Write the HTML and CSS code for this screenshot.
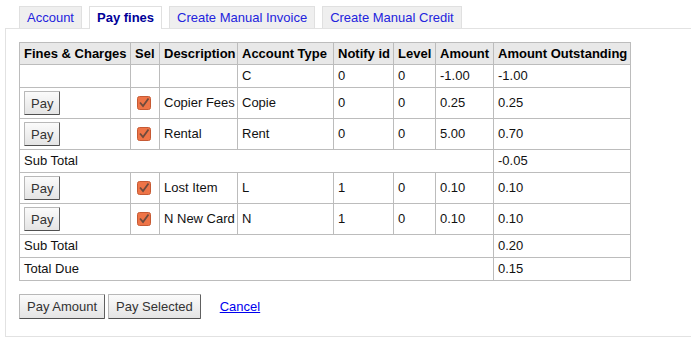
FILE: index.html
```html
<!DOCTYPE html>
<html lang="en">
<head>
    <meta charset="UTF-8">
    <title>Pay fines</title>
    <link rel="stylesheet" href="styles.css">
</head>
<body>
    <div class="page">
        <ul class="tabs">
            <li class="tab"><a href="#">Account</a></li>
            <li class="tab active"><a href="#">Pay fines</a></li>
            <li class="tab"><a href="#">Create Manual Invoice</a></li>
            <li class="tab"><a href="#">Create Manual Credit</a></li>
        </ul>

        <div class="panel">
            <table class="fines">
                <colgroup>
                    <col class="c-fines">
                    <col class="c-sel">
                    <col class="c-desc">
                    <col class="c-type">
                    <col class="c-notify">
                    <col class="c-level">
                    <col class="c-amount">
                    <col class="c-out">
                </colgroup>
                <thead>
                    <tr>
                        <th>Fines &amp; Charges</th>
                        <th>Sel</th>
                        <th>Description</th>
                        <th>Account Type</th>
                        <th>Notify id</th>
                        <th>Level</th>
                        <th>Amount</th>
                        <th>Amount Outstanding</th>
                    </tr>
                </thead>
                <tbody>
                    <tr>
                        <td></td><td></td><td></td>
                        <td>C</td><td>0</td><td>0</td><td>-1.00</td><td>-1.00</td>
                    </tr>
                    <tr class="line">
                        <td><button class="btn">Pay</button></td>
                        <td><span class="check"><svg width="14" height="14" viewBox="0 0 14 14"><rect x="0.5" y="0.5" width="13" height="13" rx="2" fill="#ee7447" stroke="#c65a34"/><path d="M3 6.5 L6 10 L11.5 2.5" fill="none" stroke="#6e4b3d" stroke-width="1.8"/></svg></span></td>
                        <td>Copier Fees</td><td>Copie</td><td>0</td><td>0</td><td>0.25</td><td>0.25</td>
                    </tr>
                    <tr class="line">
                        <td><button class="btn">Pay</button></td>
                        <td><span class="check"><svg width="14" height="14" viewBox="0 0 14 14"><rect x="0.5" y="0.5" width="13" height="13" rx="2" fill="#ee7447" stroke="#c65a34"/><path d="M3 6.5 L6 10 L11.5 2.5" fill="none" stroke="#6e4b3d" stroke-width="1.8"/></svg></span></td>
                        <td>Rental</td><td>Rent</td><td>0</td><td>0</td><td>5.00</td><td>0.70</td>
                    </tr>
                    <tr>
                        <td colspan="7">Sub Total</td><td>-0.05</td>
                    </tr>
                    <tr class="line">
                        <td><button class="btn">Pay</button></td>
                        <td><span class="check"><svg width="14" height="14" viewBox="0 0 14 14"><rect x="0.5" y="0.5" width="13" height="13" rx="2" fill="#ee7447" stroke="#c65a34"/><path d="M3 6.5 L6 10 L11.5 2.5" fill="none" stroke="#6e4b3d" stroke-width="1.8"/></svg></span></td>
                        <td>Lost Item</td><td>L</td><td>1</td><td>0</td><td>0.10</td><td>0.10</td>
                    </tr>
                    <tr class="line">
                        <td><button class="btn">Pay</button></td>
                        <td><span class="check"><svg width="14" height="14" viewBox="0 0 14 14"><rect x="0.5" y="0.5" width="13" height="13" rx="2" fill="#ee7447" stroke="#c65a34"/><path d="M3 6.5 L6 10 L11.5 2.5" fill="none" stroke="#6e4b3d" stroke-width="1.8"/></svg></span></td>
                        <td>N New Card</td><td>N</td><td>1</td><td>0</td><td>0.10</td><td>0.10</td>
                    </tr>
                    <tr>
                        <td colspan="7">Sub Total</td><td>0.20</td>
                    </tr>
                    <tr>
                        <td colspan="7">Total Due</td><td>0.15</td>
                    </tr>
                </tbody>
            </table>

            <div class="actions">
                <button class="btn">Pay Amount</button>
                <button class="btn">Pay Selected</button>
                <a class="cancel" href="#">Cancel</a>
            </div>
        </div>
    </div>
</body>
</html>
```

FILE: styles.css
```css
body {
    margin: 0;
    font-family: "Liberation Sans", Arial, sans-serif;
    font-size: 13px;
    color: #000;
    background-color: #fff;
    overflow: hidden;
}

.page {
    padding: 6px 0 0 5px;
}

/* Tab strip sits on top of the panel border */
.tabs {
    list-style: none;
    margin: 0 0 0 14px;
    padding: 0;
    display: flex;
    gap: 7px;
    position: relative;
    z-index: 1;
}

.tab {
    background-color: #efefef;
    border: 1px solid #e0e0e0;
    border-bottom: none;
    height: 22px;
    box-sizing: border-box;
}

.tab a {
    display: block;
    padding: 3px 7px 0 7px;
    line-height: 16px;
    color: #2323dd;
    text-decoration: none;
}

.tab.active {
    background-color: #fff;
    height: 23px;
    margin-bottom: -1px;
}

.tab.active a {
    color: #000099;
    font-weight: bold;
}

.panel {
    border: 1px solid #e2e2e2;
    width: 720px;
    padding: 13px 13px 17px 13px;
    box-sizing: border-box;
}

.fines {
    border-collapse: collapse;
    border: 1px solid #bcbcbc;
    table-layout: fixed;
    width: 611px;
}

.c-fines { width: 111px; }
.c-sel { width: 29px; }
.c-desc { width: 78px; }
.c-type { width: 96px; }
.c-notify { width: 60px; }
.c-level { width: 42px; }
.c-amount { width: 58px; }
.c-out { width: 137px; }

.fines th,
.fines td {
    border: 1px solid #bcbcbc;
    padding: 3px 4px;
    text-align: left;
    line-height: 16px;
    white-space: nowrap;
    overflow: visible;
}

.fines th {
    background-color: #e8e8e8;
    font-weight: bold;
    line-height: 15px;
    padding-left: 4px;
    padding-right: 2px;
}

.fines td {
    color: #111;
}

.check {
    display: block;
    margin-left: 2px;
    height: 14px;
}

.check svg {
    display: block;
}

.btn {
    font-family: "Liberation Sans", Arial, sans-serif;
    font-size: 13px;
    color: #333;
    height: 25px;
    padding: 0 7px;
    background: linear-gradient(#fbfbfb, #e4e4e4);
    border: 1px solid #b8b8b8;
    border-right-color: #606060;
    border-bottom-color: #505050;
    border-radius: 1px;
    cursor: pointer;
    vertical-align: middle;
}

.fines .btn {
    height: 24px;
    padding: 0 6px;
    display: block;
}

.actions {
    display: flex;
    align-items: center;
    gap: 3px;
    margin-top: 13px;
}

.cancel {
    margin-left: 16px;
    color: #0000ee;
    text-decoration: underline;
}
```
